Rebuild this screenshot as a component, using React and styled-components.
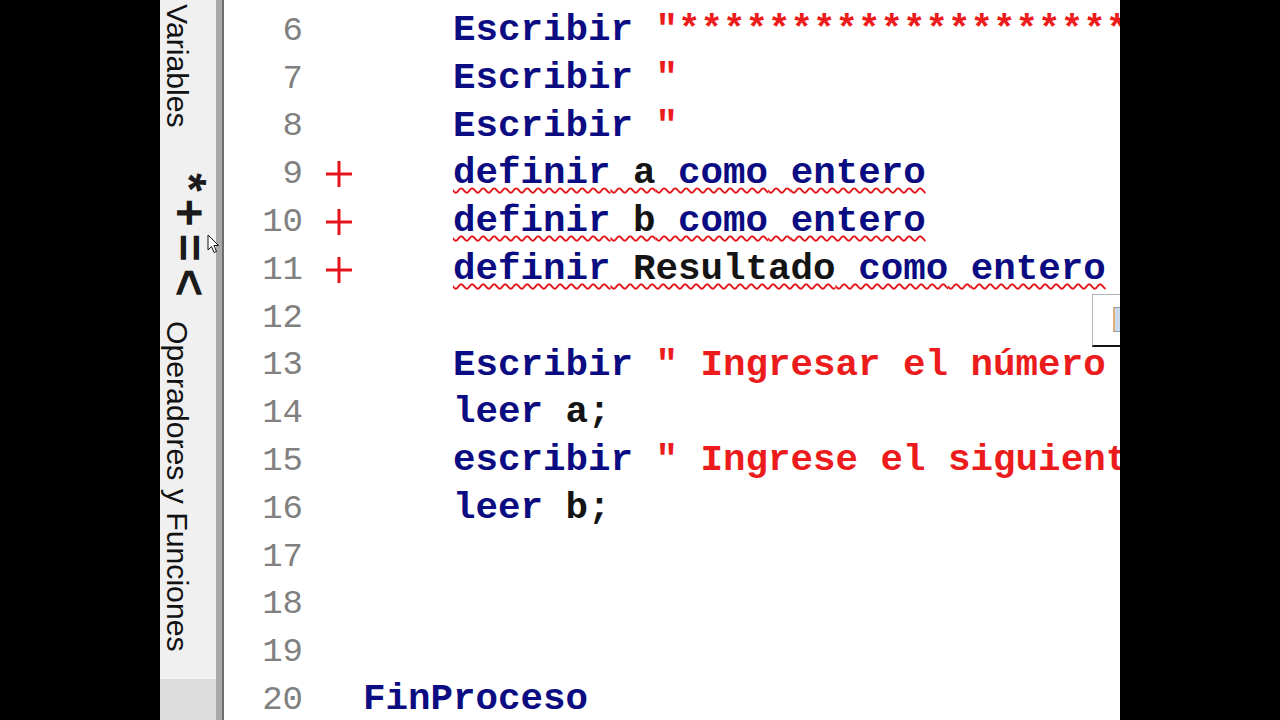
import React from "react"
import styled, { createGlobalStyle } from "styled-components"

const GlobalStyle = createGlobalStyle`
  html, body {
    margin: 0;
    padding: 0;
    background: #000;
  }
`

const Screen = styled.div`
  position: relative;
  display: flex;
  width: 1280px;
  height: 720px;
  background: #000;
  overflow: hidden;
`
const Letterbox = styled.div`
  flex: none;
  width: 160px;
  background: #000;
`
const Sidebar = styled.div`
  flex: none;
  width: 56px;
  display: flex;
  flex-direction: column;
  background: #f0f0f0;
`
const TabLabel = styled.span`
  writing-mode: vertical-rl;
  align-self: flex-start;
  margin-top: ${(p) => p.$top}px;
  font-family: "Liberation Sans", Arial, sans-serif;
  font-size: 30.2px;
  line-height: 34px;
  color: #121212;
  white-space: nowrap;
`
const Symbols = styled.span`
  writing-mode: vertical-rl;
  align-self: flex-start;
  margin: 45px 0 0 12px;
  font-family: "Liberation Sans", Arial, sans-serif;
  font-weight: 700;
  font-size: 48px;
  line-height: 34px;
  letter-spacing: 7px;
  color: #1b1b1b;
`
const SidebarFooter = styled.div`
  margin-top: auto;
  height: 41px;
  background: #dcdcdc;
  border-top: 1px solid #f6f6f6;
`
const Splitter = styled.div`
  flex: none;
  width: 6px;
  background: #a9a9a9;
  border-right: 2px solid #6f6f6f;
`
const Editor = styled.div`
  position: relative;
  flex: none;
  width: 896px;
  padding-top: 7px;
  background: #fff;
  overflow: hidden;
`
const Row = styled.div`
  display: grid;
  grid-template-columns: 79px 60px 1fr;
  align-items: center;
  height: 47.8px;
`
const LineNo = styled.span`
  text-align: right;
  font-family: "Liberation Mono", "Courier New", monospace;
  font-size: 34px;
  color: #808080;
`
const Marker = styled.span`
  display: flex;
  align-items: center;
  padding-left: 22px;
`
const Code = styled.span`
  font-family: "Liberation Mono", "Courier New", monospace;
  font-weight: 700;
  font-size: 37.5px;
  line-height: 47.8px;
  white-space: pre;
  color: #0c0c82;
`
const Squiggle = styled.span`
  text-decoration: underline wavy #e3141a;
  text-decoration-thickness: 1.6px;
  text-underline-offset: 4px;
  text-decoration-skip-ink: none;
`
const Token = styled.span`
  color: ${(p) => (p.$kind === "s" ? "#ec1c1c" : p.$kind === "i" ? "#141414" : "#0c0c82")};
`
const Popup = styled.div`
  position: absolute;
  left: 868px;
  top: 294px;
  width: 44px;
  height: 53px;
  box-sizing: border-box;
  padding: 12px 0 0 20px;
  background: #fff;
  border: 1px solid #b4b4b4;
  border-bottom: 2px solid #121212;
`
const PopupIcon = styled.div`
  width: 12px;
  height: 25px;
  box-sizing: border-box;
  background: #c7d9ea;
  border: 1px solid #8a9aaa;
  border-left: 2px solid #e1b07a;
`
const Pointer = styled.svg`
  position: absolute;
  left: 207px;
  top: 234px;
`

const PlusMark = () => (
  <svg width="28" height="28" viewBox="0 0 28 28">
    <path d="M14 1 V27 M1 14 H27" stroke="#e3141a" strokeWidth="3" fill="none" />
  </svg>
)

const IND = "    "
const stars = "*".repeat(40)

const lines = [
  { n: 6, ind: IND, toks: [["Escribir"], [" "], ['"' + stars, "s"]] },
  { n: 7, ind: IND, toks: [["Escribir"], [" "], ['"', "s"]] },
  { n: 8, ind: IND, toks: [["Escribir"], [" "], ['"', "s"]] },
  { n: 9, ind: IND, plus: true, wavy: true, toks: [["definir"], [" "], ["a", "i"], [" "], ["como"], [" "], ["entero"]] },
  { n: 10, ind: IND, plus: true, wavy: true, toks: [["definir"], [" "], ["b", "i"], [" "], ["como"], [" "], ["entero"]] },
  { n: 11, ind: IND, plus: true, wavy: true, toks: [["definir"], [" "], ["Resultado", "i"], [" "], ["como"], [" "], ["entero"]] },
  { n: 12, toks: [] },
  { n: 13, ind: IND, toks: [["Escribir"], [" "], ['" Ingresar el número a sumar"', "s"]] },
  { n: 14, ind: IND, toks: [["leer"], [" "], ["a;", "i"]] },
  { n: 15, ind: IND, toks: [["escribir"], [" "], ['" Ingrese el siguiente número"', "s"]] },
  { n: 16, ind: IND, toks: [["leer"], [" "], ["b;", "i"]] },
  { n: 17, toks: [] },
  { n: 18, toks: [] },
  { n: 19, toks: [] },
  { n: 20, ind: "", toks: [["FinProceso"]] },
]

const CodeLine = ({ line }) => {
  const body = line.toks.map(([text, kind], i) => (
    <Token key={i} $kind={kind}>
      {text}
    </Token>
  ))
  return (
    <Row>
      <LineNo>{line.n}</LineNo>
      <Marker>{line.plus && <PlusMark />}</Marker>
      <Code>
        {line.ind}
        {line.wavy ? <Squiggle>{body}</Squiggle> : body}
      </Code>
    </Row>
  )
}

export default function App() {
  return (
    <Screen>
      <GlobalStyle />
      <Letterbox />
      <Sidebar>
        <TabLabel $top={4}>Variables</TabLabel>
        <Symbols>*+=&lt;</Symbols>
        <TabLabel $top={18}>Operadores y Funciones</TabLabel>
        <SidebarFooter />
      </Sidebar>
      <Splitter />
      <Editor>
        {lines.map((line) => (
          <CodeLine key={line.n} line={line} />
        ))}
        <Popup>
          <PopupIcon />
        </Popup>
      </Editor>
      <Letterbox />
      <Pointer width="13" height="20" viewBox="0 0 13 20">
        <path d="M1 1 L1 16 L4.5 12.5 L7 18.5 L9.5 17.5 L7 11.5 L11.5 11.5 Z" fill="#fff" stroke="#111" strokeWidth="1" />
      </Pointer>
    </Screen>
  )
}
